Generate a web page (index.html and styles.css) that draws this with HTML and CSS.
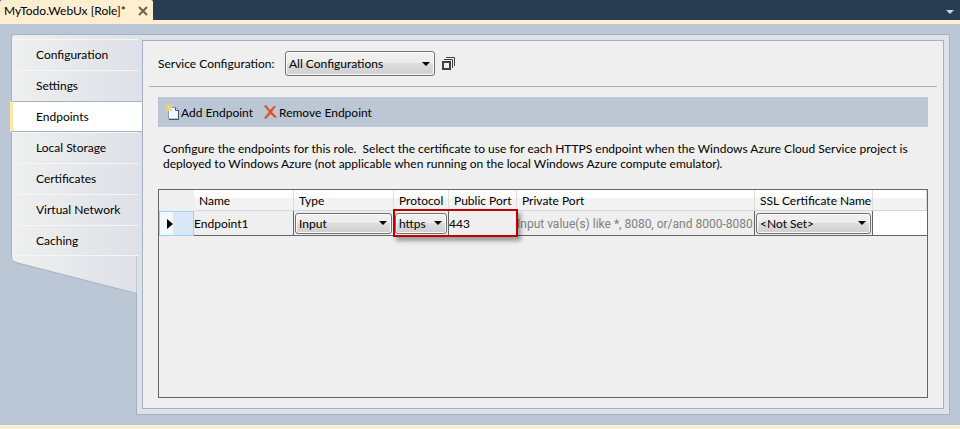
FILE: index.html
```html
<!DOCTYPE html>
<html lang="en">
<head>
<meta charset="utf-8">
<title>MyTodo.WebUx [Role]*</title>
<link rel="stylesheet" href="styles.css">
</head>
<body>
<header class="tabs">
  <div class="tab">
    <span>MyTodo.WebUx [Role]*</span>
    <button class="icon-button" type="button" aria-label="Close">
      <svg width="10" height="10" viewBox="0 0 10 10"><path d="M1 1L9 9M9 1L1 9" stroke="#75633d" stroke-width="2"/></svg>
    </button>
  </div>
  <button class="icon-button tab-list" type="button" aria-label="Open documents">
    <svg width="8" height="4" viewBox="0 0 8 4"><path d="M0 0H8L4 4Z" fill="#ced4dd"/></svg>
  </button>
</header>
<main class="designer">
  <nav class="pages">
    <ul>
      <li><a href="#configuration">Configuration</a></li>
      <li><a href="#settings">Settings</a></li>
      <li><a class="current" href="#endpoints" aria-current="page">Endpoints</a></li>
      <li><a href="#storage">Local Storage</a></li>
      <li><a href="#certificates">Certificates</a></li>
      <li><a href="#network">Virtual Network</a></li>
      <li><a href="#caching">Caching</a></li>
    </ul>
    <svg class="pages-foot" width="126" height="38" viewBox="0 0 126 38" aria-hidden="true">
      <defs><linearGradient id="foot"><stop offset="0" stop-color="#efefef"/><stop offset="1" stop-color="#dee1e8"/></linearGradient></defs>
      <path d="M0.500 0V2Q0.500 5 5 6.500L125.500 37.500V0Z" fill="url(#foot)"/>
      <path d="M0.500 0V2Q0.500 5 5 6.500L125.500 37.500" fill="none" stroke="#a5b2c3"/>
    </svg>
  </nav>
  <div class="frame">
    <section class="panel">
      <div class="service">
        <label for="service">Service Configuration:</label>
        <span class="select service-select"><select id="service"><option>All Configurations</option></select></span>
        <button class="icon-button" type="button" aria-label="Manage configurations">
          <svg width="13" height="13" viewBox="0 0 13 13" fill="none" stroke="#404040"><path d="M1 5H8V12H1Z" stroke-width="2"/><path d="M2 2.500H10.500V11M4 0.500H12.500V9"/></svg>
        </button>
      </div>
      <div class="body">
        <div class="toolbar">
          <button type="button">
            <svg width="14" height="16" viewBox="0 0 14 16"><path d="M3.500 3.500H10.500L13.500 6.500V15H3.500Z" fill="#f6f9ff" stroke="#8c9bb0"/><path d="M10.500 3.500V6.500H13.500V15.500H4" fill="none" stroke="#3f526e"/><path d="M0 0H2V2H0ZM3 0H4V2H3ZM5 0H7V2H5ZM0 3H7V4H0ZM0 5H2V7H0ZM3 5H4V7H3ZM5 5H7V7H5ZM2 2H5V5H2Z" fill="#f6d25c"/><path d="M3 3H4V4H3Z" fill="#fff"/></svg>
            Add Endpoint
          </button>
          <button type="button">
            <svg width="13" height="14" viewBox="0 0 13 14"><path d="M0 1L2 0L6 5L10 1L12 1L8 7L13 12L11 13L6.500 9L2 14L0 13L5 7Z" fill="#ea4a2c"/></svg>
            Remove Endpoint
          </button>
        </div>
        <p class="hint">Configure the endpoints for this role.&nbsp; Select the certificate to use for each HTTPS endpoint when the Windows Azure Cloud Service project is deployed to Windows Azure (not applicable when running on the local Windows Azure compute emulator).</p>
        <div class="grid">
          <table>
            <colgroup><col class="c-mark"><col class="c-name"><col class="c-type"><col class="c-protocol"><col class="c-public"><col class="c-private"><col class="c-ssl"><col></colgroup>
            <thead><tr><td></td><th>Name</th><th>Type</th><th>Protocol</th><th>Public Port</th><th>Private Port</th><th>SSL Certificate Name</th><td></td></tr></thead>
            <tbody><tr>
              <td class="mark"><svg width="6" height="10" viewBox="0 0 6 10"><path d="M0 0L6 5L0 10Z"/></svg></td>
              <td><input type="text" aria-label="Name" value="Endpoint1"></td>
              <td><span class="select"><select aria-label="Type"><option>Input</option></select></span></td>
              <td><span class="select"><select aria-label="Protocol"><option>https</option></select></span></td>
              <td class="plain"><input type="text" aria-label="Public Port" value="443"></td>
              <td><input type="text" aria-label="Private Port" placeholder="Input value(s) like *, 8080, or/and 8000-8080."></td>
              <td><span class="select"><select aria-label="SSL Certificate Name"><option>&lt;Not Set&gt;</option></select></span></td>
              <td class="rest"></td>
            </tr></tbody>
          </table>
          <div class="highlight"></div>
        </div>
      </div>
    </section>
  </div>
</main>
</body>
</html>
```
FILE: styles.css
```css
* { box-sizing: border-box; }
body {
  margin: 0;
  min-height: 100vh;
  display: flex;
  flex-direction: column;
  background: #bcc7d6;
  border-bottom: 4px solid #ffefd0;
  color: #000;
  font: 12px/15px Lato, "Open Sans", sans-serif;
}
button, input, select { font: inherit; color: inherit; }
button { border: 0; padding: 0; background: none; }
svg { display: block; flex: none; }

.tabs {
  height: 24px;
  display: flex;
  justify-content: space-between;
  background: #293d52;
  border-bottom: 4px solid #ffefd0;
}
.tab {
  height: 24px;
  width: 153px;
  padding: 0 5px 3px 4px;
  display: flex;
  align-items: center;
  justify-content: space-between;
  white-space: nowrap;
  background: #ffefd0;
  border-radius: 2px 2px 0 0;
}
.icon-button { display: flex; }
.tab-list { padding: 10px 6px 0; }

.designer {
  flex: 1;
  display: flex;
  margin: 10px 10px 10px 11px;
}
.pages {
  flex: none;
  width: 126px;
  margin-right: -1px;
  position: relative;
  z-index: 1;
}
.pages ul {
  list-style: none;
  margin: 0;
  padding: 4px 0 0;
  border: solid #a5b2c3;
  border-width: 1px 0 0 1px;
  border-top-left-radius: 4px;
  background: linear-gradient(90deg, #efefef, #dee1e8);
}
.pages a {
  display: block;
  height: 31px;
  margin-right: -1px;
  padding: 7px 0 0 24px;
  border-top: 1px solid #f6f6f6;
  color: inherit;
  text-decoration: none;
}
.pages li:last-child a { border-bottom: 1px solid #f6f6f6; }
.pages a.current {
  margin: 0 -5px 0 -2px;
  padding-left: 23px;
  background: #fff;
  border: solid #a5b2c3;
  border-width: 1px 0;
  border-left: 3px solid #ffe8a6;
}
.frame {
  flex: 1;
  min-width: 0;
  display: flex;
  padding: 5px;
  background: #dee1e8;
  border: 1px solid #a5b2c3;
}
.panel {
  flex: 1;
  min-width: 0;
  display: flex;
  flex-direction: column;
  padding: 0 6px 10px;
  background: #efefef;
  border: 1px solid #a5b2c3;
}
.service {
  display: flex;
  align-items: center;
  height: 46px;
  padding-left: 9px;
  border-bottom: 1px solid #a5b2c3;
}
.service label { width: 127px; white-space: nowrap; }
.service-select { width: 150px; height: 25px; margin-right: 7px; }

.select { display: block; position: relative; }
.select select {
  display: block;
  width: 100%;
  height: 100%;
  appearance: none;
  padding: 0 16px 0 3px;
  border: 1px solid #707070;
  border-radius: 3px;
  background: linear-gradient(#f2f2f2, #ebebeb 50%, #dddddd 50%, #cfcfcf);
  box-shadow: inset 0 0 0 1px #fafafa;
}
.select::after {
  content: "";
  position: absolute;
  right: 5px;
  top: calc(50% - 2px);
  border: solid transparent;
  border-width: 4px 4px 0;
  border-top-color: #000;
}

.body {
  flex: 1;
  display: flex;
  flex-direction: column;
  margin: 10px 9px 0;
}
.toolbar {
  display: flex;
  gap: 11px;
  height: 30px;
  padding-left: 7px;
  background: #bcc7d6;
}
.toolbar button { display: flex; align-items: center; gap: 2px; }
.hint { margin: 14px 5px 18px; }

.grid {
  flex: 1;
  position: relative;
  border: 1px solid #646464;
}
table { width: 100%; table-layout: fixed; border-collapse: separate; border-spacing: 0; }
.c-mark { width: 35px; }
.c-name, .c-type { width: 100px; }
.c-protocol { width: 55px; }
.c-public { width: 68px; }
.c-private { width: 238px; }
.c-ssl { width: 118px; }
td, th { padding: 0; text-align: left; font-weight: normal; white-space: nowrap; }
thead th, thead td { height: 21px; }
thead th, thead td:last-child {
  padding-left: 5px;
  border-right: 1px solid #dedede;
  border-bottom: 1px solid #d5d5d5;
  background: linear-gradient(#fff 40%, #f3f3f3 40%);
}
tbody td { height: 25px; border-right: 1px solid #646464; border-bottom: 1px solid #646464; }
tbody td.plain { border-right-color: transparent; }
tbody .mark {
  border: 1px solid #99d1f5;
  padding-left: 7px;
  background: linear-gradient(90deg, #f4f8fd 40%, #dae7f7 40%);
}
tbody .rest { background: #fff; border-right: 0; }
tbody input { display: block; width: 100%; border: 0; padding: 0; background: none; }
tbody input::placeholder { font-family: Roboto, sans-serif; color: #808080; opacity: 1; }
tbody .select { height: 21px; margin: 0 1px; }
.highlight {
  position: absolute;
  left: 234px;
  top: 19px;
  width: 125px;
  height: 28px;
  border: 2px solid #c00000;
  box-shadow: 3px 4px 4px rgba(0, 0, 0, .35);
  pointer-events: none;
}
```
